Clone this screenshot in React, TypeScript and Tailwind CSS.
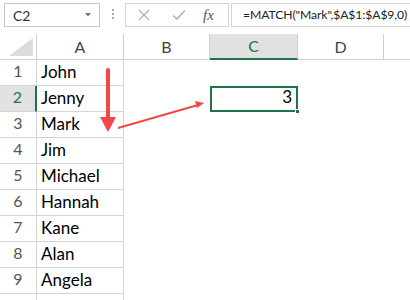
import React from 'react';

const names = ['John', 'Jenny', 'Mark', 'Jim', 'Michael', 'Hannah', 'Kane', 'Alan', 'Angela', ''];

const cellFont = { fontFamily: 'Lato, "Open Sans", sans-serif' };

export default function App() {
  return (
    <div
      className="relative w-[410px] h-[300px] overflow-hidden bg-white text-[#222]"
      style={cellFont}
    >
      {/* Formula bar */}
      <div className="flex h-[34px] items-start pt-[3px]">
        <div className="ml-[4px] flex h-[24px] w-[96px] shrink-0 items-center justify-between border border-[#c6c6c6] pl-[8px] pr-[8px] text-[14px] text-[#333]">
          <span>C2</span>
          <svg width="6" height="4" viewBox="0 0 6 4">
            <path d="M0 0 L6 0 L3 3.5 Z" fill="#777" />
          </svg>
        </div>
        <div className="flex w-[25px] shrink-0 flex-col items-center gap-[2px] pt-[6px]">
          <span className="h-[2px] w-[2px] bg-[#aaa]" />
          <span className="h-[2px] w-[2px] bg-[#aaa]" />
          <span className="h-[2px] w-[2px] bg-[#aaa]" />
        </div>
        <div className="flex h-[24px] w-[104px] shrink-0 items-center border border-[#d4d4d4] pl-[12px]">
          <svg width="12" height="12" viewBox="0 0 12 12" className="mr-[22px]">
            <path d="M1 1 L11 11 M11 1 L1 11" stroke="#b0b0b0" strokeWidth="1.2" />
          </svg>
          <svg width="14" height="12" viewBox="0 0 14 12" className="mr-[17px]">
            <path d="M1 6.5 L5 10 L13 1.5" stroke="#b0b0b0" strokeWidth="1.6" fill="none" />
          </svg>
          <span
            className="text-[15px] italic text-[#555]"
            style={{ fontFamily: '"Liberation Serif", serif' }}
          >
            fx
          </span>
        </div>
        <div className="ml-[2px] flex h-[24px] min-w-0 flex-1 items-center overflow-hidden whitespace-nowrap border border-r-0 border-[#d4d4d4] pl-[11px] text-[12.2px] tracking-[-0.1px] text-[#222]">
          =MATCH("Mark",$A$1:$A$9,0)
        </div>
      </div>

      {/* Grid */}
      <div className="grid grid-cols-[37px_87px_86px_88px_86px_1fr] auto-rows-[26px]">
        {/* Header row */}
        <div className="relative border-r border-b border-[#d0d0d0]">
          <svg width="24" height="18" viewBox="0 0 24 18" className="absolute right-[3px] bottom-[3px]">
            <path d="M24 0 L24 18 L0 18 Z" fill="#dcdcdc" />
          </svg>
        </div>
        <div className="flex items-center justify-center border-r border-b border-[#d0d0d0] text-[16px] text-[#444]">A</div>
        <div className="flex items-center justify-center border-r border-b border-[#d0d0d0] text-[16px] text-[#444]">B</div>
        <div className="flex items-center justify-center border-r border-b-2 border-[#d0d0d0] border-b-[#217346] bg-[#e1e1e1] text-[16px] text-[#217346]">C</div>
        <div className="flex items-center justify-center border-r border-b border-[#d0d0d0] text-[16px] text-[#444]">D</div>
        <div className="border-b border-[#d0d0d0]" />

        {names.map((n, i) => {
          const row = i + 1;
          const active = row === 2;
          return (
            <React.Fragment key={row}>
              <div
                className={
                  active
                    ? 'flex items-end justify-center border-b border-r-2 border-[#d4d4d4] border-r-[#217346] bg-[#e1e1e1] pb-[2px] text-[16px] text-[#217346]'
                    : 'flex items-end justify-center border-r border-b border-[#d4d4d4] pb-[2px] text-[16px] text-[#555]'
                }
              >
                {row < 10 ? row : ''}
              </div>
              <div className="flex items-end border-r border-b border-[#d4d4d4] pb-[1px] pl-[4px] text-[17px] text-black">
                {n}
              </div>
              <div />
              {active ? (
                <div className="relative flex items-end justify-end border-2 border-[#217346] pr-[4px] pb-[1px] text-[17px] text-black">
                  3
                  <span className="absolute right-[-4px] bottom-[-4px] h-[5px] w-[5px] border border-white bg-[#217346]" />
                </div>
              ) : (
                <div />
              )}
              <div />
              <div />
            </React.Fragment>
          );
        })}
      </div>

      {/* Annotation arrows */}
      <svg className="absolute left-0 top-0" width="410" height="300" viewBox="0 0 410 300">
        <path d="M108 70 L108 120" stroke="#f44848" strokeWidth="4" strokeLinecap="round" />
        <path d="M100 117 L116 117 L108 132 Z" fill="#f44848" />
        <path d="M118 128 L198 105" stroke="#f44848" strokeWidth="2" />
        <path d="M204 103 L195 101 L197 108 Z" fill="#f44848" />
      </svg>
    </div>
  );
}
